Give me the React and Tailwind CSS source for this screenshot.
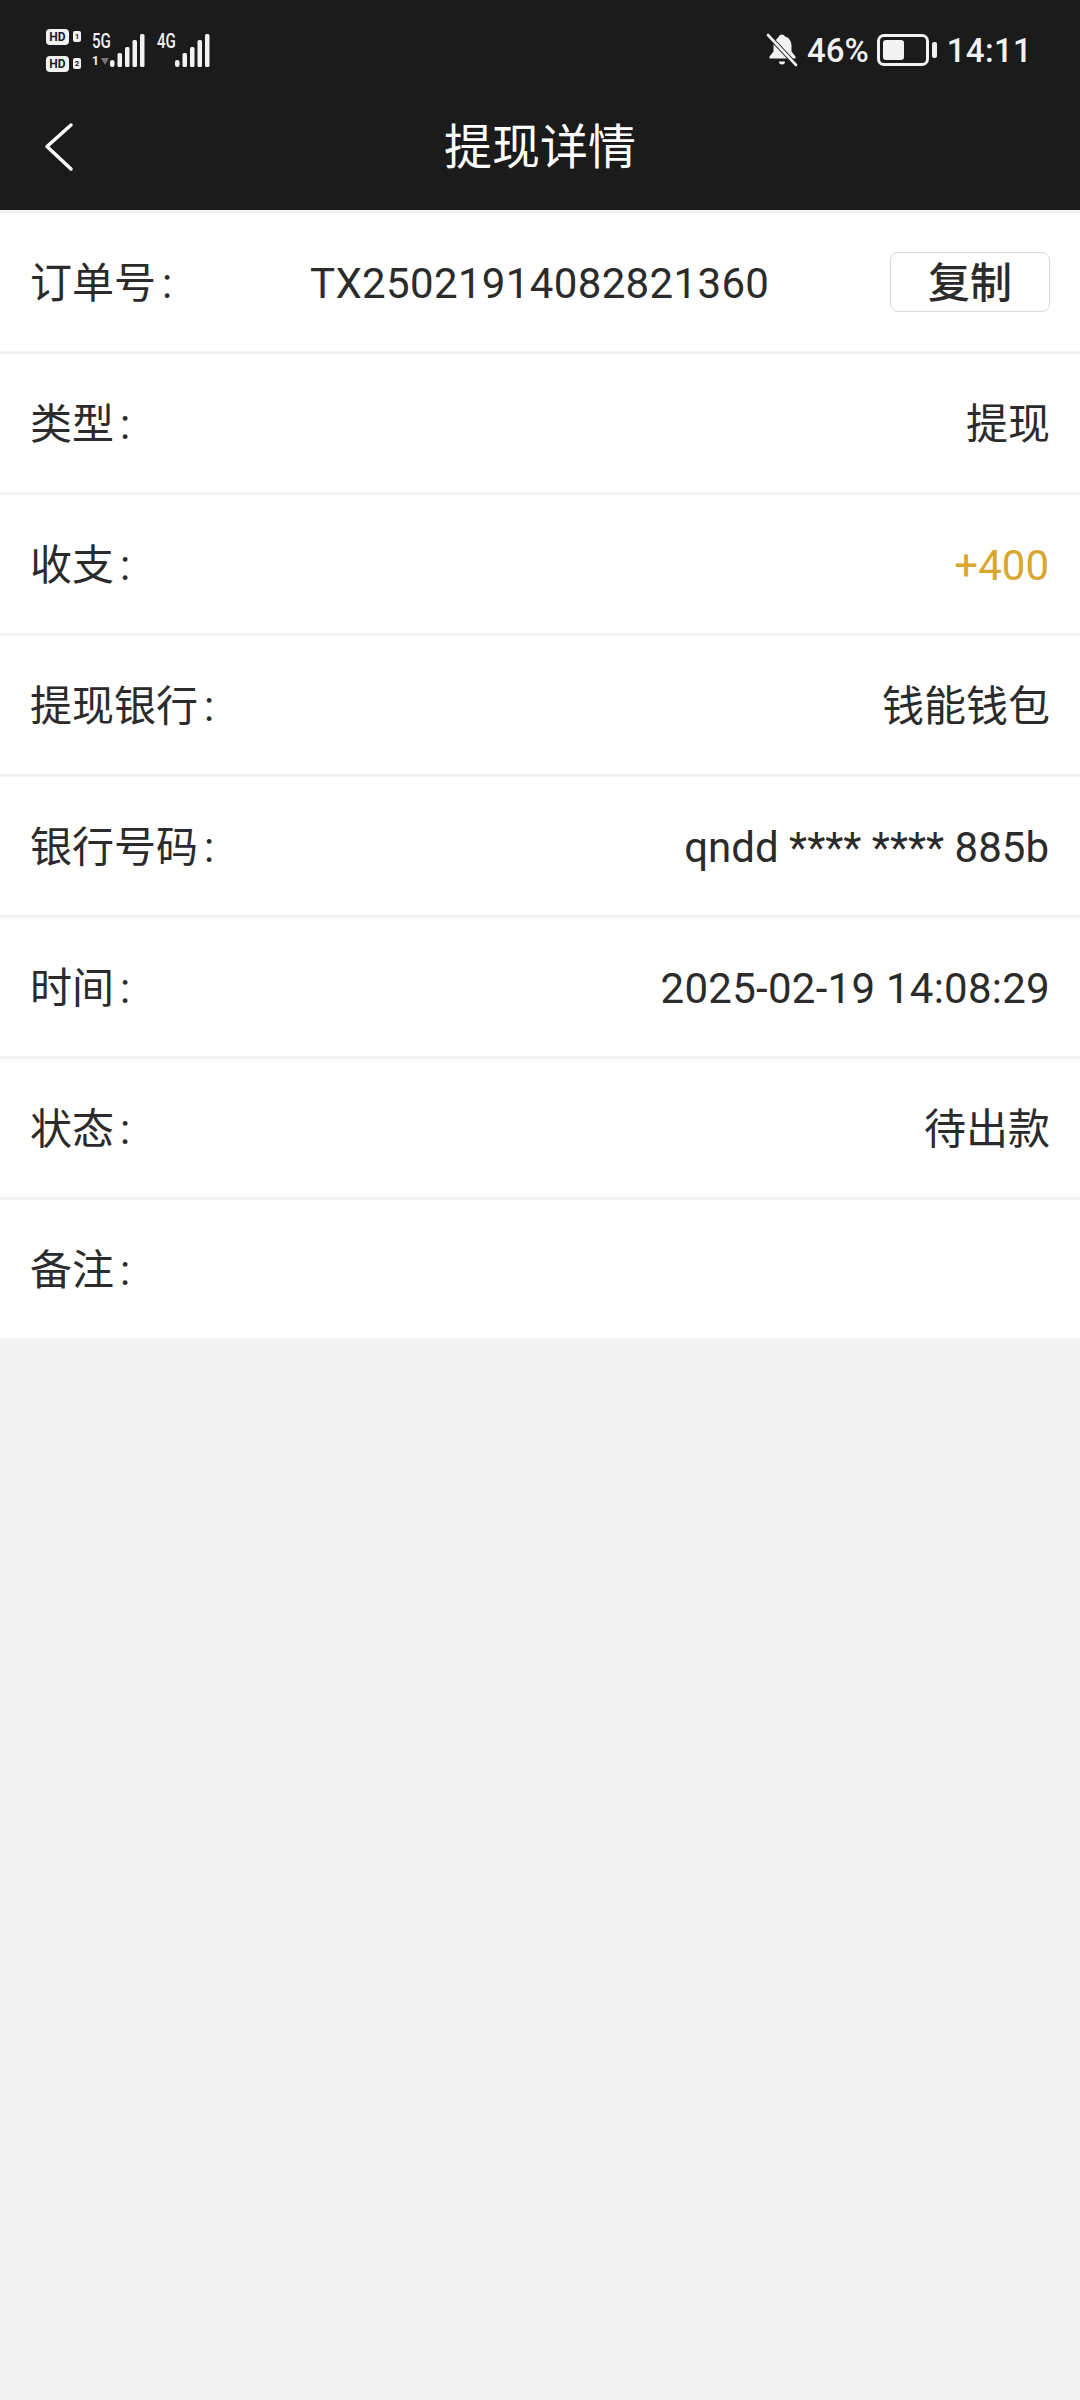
import React from "react";

const FONT = "font-['Roboto','Noto_Sans_CJK_SC',sans-serif]";

const rows = [
  { label: "类型", value: "提现" },
  { label: "收支", value: "+400", valueClass: "mr-[1px] text-[#d9a62e]" },
  { label: "提现银行", value: "钱能钱包" },
  { label: "银行号码", value: "qndd **** **** 885b", valueClass: "mr-[1px] text-[#2b2b2b]" },
  { label: "时间", value: "2025-02-19 14:08:29", valueClass: "text-[#2b2b2b] tracking-[0.26px]" },
  { label: "状态", value: "待出款" },
  { label: "备注", value: "" }
];

const SignalBars = () => (
  <svg width="35" height="33" viewBox="0 0 35 33" fill="#f2f2f2">
    <rect x="0" y="26" width="4.500" height="7" rx="2.200" />
    <rect x="7.500" y="19" width="4.500" height="14" rx="1.500" />
    <rect x="15" y="13" width="4.500" height="20" rx="1.500" />
    <rect x="22.500" y="6" width="4.500" height="27" rx="1.500" />
    <rect x="30" y="0" width="4.500" height="33" rx="1.500" />
  </svg>
);

const HdBadge = ({ sim }) => (
  <div className="flex items-center gap-[4px]">
    <span className="flex h-[16px] w-[23px] items-center justify-center rounded-[4px] bg-[#f2f2f2] text-[12px] leading-none font-bold text-[#1b1b1b]">
      HD
    </span>
    <span className="flex h-[11px] w-[8px] items-center justify-center rounded-[2px] bg-[#f2f2f2] text-[8px] leading-none font-bold text-[#1b1b1b]">
      {sim}
    </span>
  </div>
);

const NetworkLabel = ({ children }) => (
  <span className="block origin-top-left scale-x-[0.72] text-[21px] leading-[15px] font-medium whitespace-nowrap">
    {children}
  </span>
);

const StatusBar = () => (
  <div className="flex h-[100px] items-center justify-between pr-[48px] pl-[46px] text-[#f2f2f2]">
    <div className="flex items-center">
      <div className="flex flex-col gap-[11px]">
        <HdBadge sim="1" />
        <HdBadge sim="2" />
      </div>
      <div className="ml-[11px] flex items-end">
        <div className="relative h-[33px] w-[18px]">
          <NetworkLabel>5G</NetworkLabel>
          <span className="absolute bottom-0 left-0 text-[12px] leading-[11px] font-bold">1</span>
          <span className="absolute bottom-[2px] left-[9px] h-0 w-0 border-x-[4px] border-t-[7px] border-x-transparent border-t-[#777]" />
        </div>
        <SignalBars />
      </div>
      <div className="ml-[12px] flex items-end">
        <div className="h-[33px] w-[18px]">
          <NetworkLabel>4G</NetworkLabel>
        </div>
        <SignalBars />
      </div>
    </div>
    <div className="flex items-center">
      <svg width="32" height="34" viewBox="0 0 32 34" fill="#f2f2f2" className="mr-[9px]">
        <path d="M12.500 4a3.500 3.500 0 0 1 6.500-.5c4.300 1.200 6.500 5 6.500 9.500v5.500l4 5v2H3.500v-2l4-5V13c0-1.500.2-3 .8-4.200z" />
        <path d="M13 28.500h6a3 3 0 0 1-6 0z" />
        <path d="M1 1l29 31" stroke="#1b1b1b" strokeWidth="4.500" />
        <path d="M2 2l28 30" stroke="#f2f2f2" strokeWidth="2.600" strokeLinecap="round" />
      </svg>
      <span className="text-[33px] leading-none font-medium">46%</span>
      <div className="mr-[10px] ml-[8px] flex items-center gap-[3px]">
        <div className="flex h-[32px] w-[52px] items-center rounded-[7px] border-[3px] border-[#f2f2f2] px-[3px]">
          <div className="h-[20px] w-[21px] rounded-[3px] bg-[#f2f2f2]" />
        </div>
        <div className="h-[16px] w-[5px] rounded-[2px] bg-[#f2f2f2]" />
      </div>
      <span className="text-[33px] leading-none font-medium tracking-[0.3px]">14:11</span>
    </div>
  </div>
);

const NavBar = () => (
  <div className="relative flex h-[110px] items-start justify-center pt-[15px]">
    <svg width="30" height="50" viewBox="0 0 30 50" fill="none" className="absolute top-[22px] left-[44px]">
      <path d="M27 3L3 24.500L27 47" stroke="#ffffff" strokeWidth="3.500" strokeLinecap="round" strokeLinejoin="round" />
    </svg>
    <h1 className="text-[48px] leading-[66px] font-normal text-white">提现详情</h1>
  </div>
);

const Label = ({ text }) => (
  <span className="text-[#2b2b2b]">
    {text}
    <span className="ml-[6px]">:</span>
  </span>
);

const Row = ({ label, value, valueClass = "text-[#2b2b2b]" }) => (
  <div className="flex h-[138px] items-center justify-between bg-white px-[30px] pt-[3px] text-[42px]">
    <Label text={label} />
    <span className={valueClass}>{value}</span>
  </div>
);

const App = () => {
  return (
    <div className={`flex min-h-[2400px] w-[1080px] flex-col bg-[#f3f3f3] ${FONT}`}>
      <header className="bg-[#1b1b1b]">
        <StatusBar />
        <NavBar />
      </header>
      <main className="mt-[3px] flex flex-col gap-[3px]">
        <div className="flex h-[138px] items-center bg-white pr-[30px] pl-[30px] text-[42px] text-[#2b2b2b]">
          <div className="w-[280px] pt-[3px]">
            <Label text="订单号" />
          </div>
          <span className="flex-1 pt-[3px] tracking-[0.35px]">TX25021914082821360</span>
          <button className="flex h-[60px] w-[160px] items-center justify-center rounded-[8px] border border-[#d9d9d9] bg-white pt-[2px] text-[42px] font-medium text-[#2b2b2b]">
            复制
          </button>
        </div>
        {rows.map((row) => (
          <Row key={row.label} {...row} />
        ))}
      </main>
    </div>
  );
};

export default App;
